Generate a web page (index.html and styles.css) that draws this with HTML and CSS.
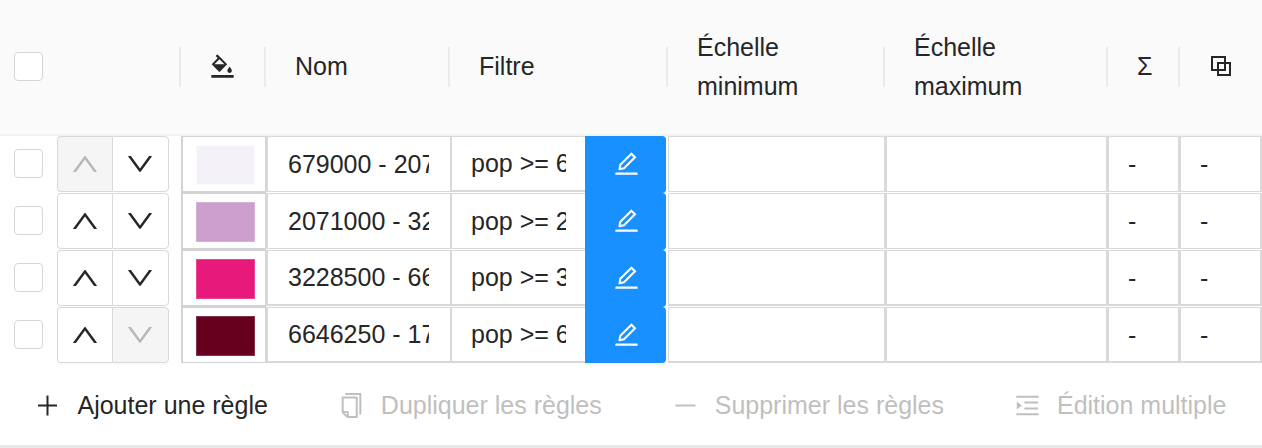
FILE: index.html
```html
<!DOCTYPE html>
<html lang="fr">
<head>
<meta charset="utf-8">
<title>Règles</title>
<link rel="stylesheet" href="styles.css">
</head>
<body>
<svg class="sprite" aria-hidden="true">
  <symbol id="up" viewBox="64 64 896 896"><path d="M890.5 755.3L537.9 269.2c-12.8-17.6-39-17.6-51.7 0L133.5 755.3A8 8 0 00140 768h75c5.1 0 9.9-2.5 12.9-6.6L512 369.8l284.1 391.6c3 4.1 7.8 6.6 12.9 6.6h75c6.5 0 10.3-7.4 6.5-12.7z"/></symbol>
  <symbol id="down" viewBox="64 64 896 896"><path d="M884 256h-75c-5.1 0-9.9 2.5-12.9 6.6L512 654.2 227.9 262.6c-3-4.1-7.8-6.6-12.9-6.6h-75c-6.5 0-10.3 7.4-6.5 12.7l352.6 486.1c12.8 17.6 39 17.6 51.7 0l352.6-486.1c3.9-5.3.1-12.7-6.4-12.7z"/></symbol>
  <symbol id="edit" viewBox="64 64 896 896"><path d="M257.7 752c2 0 4-.2 6-.5L431.9 722c2-.4 3.9-1.3 5.3-2.8l423.9-423.9a9.96 9.96 0 000-14.1L694.9 114.9c-1.9-1.9-4.4-2.9-7.1-2.9s-5.2 1-7.1 2.9L256.8 538.8c-1.5 1.5-2.4 3.3-2.8 5.3l-29.5 168.2a33.5 33.5 0 009.4 29.8c6.6 6.4 14.9 9.9 23.8 9.9zm67.4-174.4L687.8 215l73.3 73.3-362.7 362.6-88.9 15.7 15.6-89zM880 836H144c-17.7 0-32 14.3-32 32v36c0 4.4 3.6 8 8 8h784c4.4 0 8-3.6 8-8v-36c0-17.7-14.3-32-32-32z"/></symbol>
  <symbol id="fill" viewBox="64 64 896 896"><path d="M766.4 744.3c43.7 0 79.4-36.2 79.4-80.5 0-53.5-79.4-140.8-79.4-140.8S687 610.3 687 663.8c0 44.3 35.7 80.5 79.4 80.5zm-377.1-44.1c7.1 7.1 18.6 7.1 25.6 0l256.1-256c7.1-7.1 7.1-18.6 0-25.6l-256-256c-.6-.6-1.3-1.2-2-1.7l-78.2-78.2a9.11 9.11 0 00-12.8 0l-48 48a9.11 9.11 0 000 12.8l67.2 67.2-207.8 207.9c-7.1 7.1-7.1 18.6 0 25.6l255.9 256zm12.9-448.6l178.9 178.9H223.4l178.8-178.9zM904 816H120c-4.4 0-8 3.6-8 8v80c0 4.4 3.6 8 8 8h784c4.4 0 8-3.6 8-8v-80c0-4.4-3.6-8-8-8z"/></symbol>
  <symbol id="overlap" viewBox="0 0 25 25"><path d="M3 3h13v13H3zM9 9h12v12H9z" fill="none" stroke="currentColor" stroke-width="2"/></symbol>
  <symbol id="plus" viewBox="0 0 25 25"><path d="M3 11.5h19v2H3zM11.5 2.5h2v20h-2z"/></symbol>
  <symbol id="minus" viewBox="0 0 25 25"><path d="M2.5 11.5h20v2h-20z"/></symbol>
  <symbol id="copy" viewBox="64 64 896 896"><path d="M832 64H296c-4.4 0-8 3.6-8 8v56c0 4.4 3.6 8 8 8h496v688c0 4.4 3.6 8 8 8h56c4.4 0 8-3.6 8-8V96c0-17.7-14.3-32-32-32zM704 192H192c-17.7 0-32 14.3-32 32v530.7c0 8.5 3.4 16.6 9.4 22.6l173.3 173.3c2.2 2.2 4.7 4 7.4 5.5v1.9h4.2c3.5 1.3 7.2 2 11 2H704c17.7 0 32-14.3 32-32V224c0-17.7-14.3-32-32-32zM350 856.2L263.9 770H350v86.2zM664 888H414V746c0-22.1-17.9-40-40-40H232V264h432v624z"/></symbol>
  <symbol id="multi" viewBox="64 64 896 896"><path d="M408 442h480c4.4 0 8-3.6 8-8v-56c0-4.4-3.6-8-8-8H408c-4.4 0-8 3.6-8 8v56c0 4.4 3.6 8 8 8zm-8 204c0 4.4 3.6 8 8 8h480c4.4 0 8-3.6 8-8v-56c0-4.4-3.6-8-8-8H408c-4.4 0-8 3.6-8 8v56zm504-486H120c-4.4 0-8 3.6-8 8v56c0 4.4 3.6 8 8 8h784c4.4 0 8-3.6 8-8v-56c0-4.4-3.6-8-8-8zm0 632H120c-4.4 0-8 3.6-8 8v56c0 4.4 3.6 8 8 8h784c4.4 0 8-3.6 8-8v-56c0-4.4-3.6-8-8-8zM142.4 642.1L298.7 519a8.84 8.84 0 000-13.9L142.4 381.9c-5.8-4.6-14.4-.5-14.4 6.9v246.3a8.9 8.9 0 0014.4 7z"/></symbol>
</svg>
<table class="rules">
  <colgroup>
    <col class="col-check"><col class="col-order"><col class="col-color"><col class="col-name"><col class="col-filter"><col class="col-min"><col class="col-max"><col class="col-count"><col class="col-dup">
  </colgroup>
  <thead>
    <tr>
      <th class="check"><input type="checkbox" class="checkbox" aria-label="Tout sélectionner"></th>
      <th class="sep"></th>
      <th class="sep"><div class="head"><svg class="icon"><use href="#fill"/></svg></div></th>
      <th class="sep"><div class="head">Nom</div></th>
      <th class="sep"><div class="head">Filtre</div></th>
      <th class="sep"><div class="head">Échelle minimum</div></th>
      <th class="sep"><div class="head">Échelle maximum</div></th>
      <th class="sep"><div class="head">Σ</div></th>
      <th><div class="head"><svg class="icon"><use href="#overlap"/></svg></div></th>
    </tr>
  </thead>
  <tbody>
    <tr>
      <td class="check"><input type="checkbox" class="checkbox" aria-label="Sélectionner la règle 1"></td>
      <td><div class="order"><button class="move" disabled aria-label="Monter"><svg class="arrow"><use href="#up"/></svg></button><button class="move" aria-label="Descendre"><svg class="arrow"><use href="#down"/></svg></button></div></td>
      <td class="color"><button class="color-cell" aria-label="Symbole"><span class="swatch swatch-pale"></span></button></td>
      <td><input class="field name" aria-label="Nom" value="679000 - 2071000"></td>
      <td><div class="filter"><input class="field filter-text" aria-label="Filtre" value="pop &gt;= 679000"><button class="edit" aria-label="Modifier le filtre"><svg class="icon"><use href="#edit"/></svg></button></div></td>
      <td><input class="field scale-min" aria-label="Échelle minimum"></td>
      <td><input class="field scale-max" aria-label="Échelle maximum"></td>
      <td><div class="field">-</div></td>
      <td><div class="field">-</div></td>
    </tr>
    <tr>
      <td class="check"><input type="checkbox" class="checkbox" aria-label="Sélectionner la règle 2"></td>
      <td><div class="order"><button class="move" aria-label="Monter"><svg class="arrow"><use href="#up"/></svg></button><button class="move" aria-label="Descendre"><svg class="arrow"><use href="#down"/></svg></button></div></td>
      <td class="color"><button class="color-cell" aria-label="Symbole"><span class="swatch swatch-mauve"></span></button></td>
      <td><input class="field name" aria-label="Nom" value="2071000 - 3228500"></td>
      <td><div class="filter"><input class="field filter-text" aria-label="Filtre" value="pop &gt;= 2071000"><button class="edit" aria-label="Modifier le filtre"><svg class="icon"><use href="#edit"/></svg></button></div></td>
      <td><input class="field scale-min" aria-label="Échelle minimum"></td>
      <td><input class="field scale-max" aria-label="Échelle maximum"></td>
      <td><div class="field">-</div></td>
      <td><div class="field">-</div></td>
    </tr>
    <tr>
      <td class="check"><input type="checkbox" class="checkbox" aria-label="Sélectionner la règle 3"></td>
      <td><div class="order"><button class="move" aria-label="Monter"><svg class="arrow"><use href="#up"/></svg></button><button class="move" aria-label="Descendre"><svg class="arrow"><use href="#down"/></svg></button></div></td>
      <td class="color"><button class="color-cell" aria-label="Symbole"><span class="swatch swatch-pink"></span></button></td>
      <td><input class="field name" aria-label="Nom" value="3228500 - 6646250"></td>
      <td><div class="filter"><input class="field filter-text" aria-label="Filtre" value="pop &gt;= 3228500"><button class="edit" aria-label="Modifier le filtre"><svg class="icon"><use href="#edit"/></svg></button></div></td>
      <td><input class="field scale-min" aria-label="Échelle minimum"></td>
      <td><input class="field scale-max" aria-label="Échelle maximum"></td>
      <td><div class="field">-</div></td>
      <td><div class="field">-</div></td>
    </tr>
    <tr>
      <td class="check"><input type="checkbox" class="checkbox" aria-label="Sélectionner la règle 4"></td>
      <td><div class="order"><button class="move" aria-label="Monter"><svg class="arrow"><use href="#up"/></svg></button><button class="move" disabled aria-label="Descendre"><svg class="arrow"><use href="#down"/></svg></button></div></td>
      <td class="color"><button class="color-cell" aria-label="Symbole"><span class="swatch swatch-wine"></span></button></td>
      <td><input class="field name" aria-label="Nom" value="6646250 - 17000000"></td>
      <td><div class="filter"><input class="field filter-text" aria-label="Filtre" value="pop &gt;= 6646250"><button class="edit" aria-label="Modifier le filtre"><svg class="icon"><use href="#edit"/></svg></button></div></td>
      <td><input class="field scale-min" aria-label="Échelle minimum"></td>
      <td><input class="field scale-max" aria-label="Échelle maximum"></td>
      <td><div class="field">-</div></td>
      <td><div class="field">-</div></td>
    </tr>
  </tbody>
</table>
<footer class="actions">
  <button class="action"><svg class="icon"><use href="#plus"/></svg>Ajouter une règle</button>
  <button class="action" disabled><svg class="icon"><use href="#copy"/></svg>Dupliquer les règles</button>
  <button class="action" disabled><svg class="icon"><use href="#minus"/></svg>Supprimer les règles</button>
  <button class="action" disabled><svg class="icon"><use href="#multi"/></svg>Édition multiple</button>
</footer>
</body>
</html>
```
FILE: styles.css
```css
* { box-sizing: border-box; }

body {
  margin: 0;
  background: #fff;
  color: #262626;
  font: 25px/39px "Liberation Sans", Arial, sans-serif;
}

button, input { font: inherit; color: inherit; margin: 0; border-radius: 0; }
button { padding: 0; border: 0; background: none; }

.sprite { display: none; }
.icon { display: block; flex: none; width: 25px; height: 25px; fill: currentColor; }
.arrow { display: block; width: 28px; height: 28px; fill: currentColor; }

.rules { width: 100%; table-layout: fixed; border-collapse: separate; border-spacing: 0; }
.col-check { width: 57px; }
.col-order { width: 124px; }
.col-color { width: 85px; }
.col-name { width: 184px; }
.col-filter { width: 218px; }
.col-min { width: 217px; }
.col-max { width: 223px; }
.col-count { width: 72px; }
.col-dup { width: 82px; }

th {
  height: 136px;
  padding: 0 0 1px;
  background: #fafafa;
  border-bottom: 2px solid #f2f2f2;
  font-weight: 400;
  text-align: left;
}
.sep {
  background: linear-gradient(#ebebeb, #ebebeb) right center / 2px 40px no-repeat #fafafa;
}
.head { padding: 0 26px 0 29px; }

td { height: 57px; padding: 0 0 1px; vertical-align: top; }
.check { padding: 0 0 2px 14px; vertical-align: middle; }

.checkbox {
  display: block;
  appearance: none;
  width: 29px;
  height: 29px;
  background: #fff;
  border: 1px solid #d6d6d6;
  border-radius: 4px;
}

.order { display: flex; width: 112px; }
.move {
  flex: 1;
  display: flex;
  align-items: center;
  justify-content: center;
  height: 56px;
  background: #fff;
  border: 1px solid #d9d9d9;
}
.move:first-child { flex: none; width: 55px; border-radius: 4px 0 0 4px; border-right: 0; }
.move:last-child { padding-right: 2px; border-radius: 0 4px 4px 0; }
.move:disabled { background: #f5f5f5; color: #b8b8b8; }
tr:last-child .order { box-shadow: 0 3px 0 -1px #fafafa; }

.color { background: #d3d3d3; }
tr:last-child .color { background: #fff; }
.color-cell {
  display: flex;
  align-items: center;
  width: 100%;
  height: 56px;
  padding: 2px 10px 0 13px;
  background: #fff;
  border: solid #d3d3d3;
  border-width: 1px 1px 1px 2px;
}
.swatch { flex: 1; height: 40px; border: 1px solid rgb(255 255 255 / 20%); }
.swatch-pale { background: #f4f2f8; border-color: rgb(255 255 255 / 60%); }
.swatch-mauve { background: #cd9fce; }
.swatch-pink { background: #e7197b; }
.swatch-wine { background: #67001f; }

.field {
  display: block;
  width: 100%;
  height: 56px;
  padding: 0 19px;
  background: #fff;
  border: solid #d9d9d9;
  border-width: 1px 2px 1px 1px;
  line-height: 54px;
}
.name { border-width: 1px 0 1px 2px; padding: 0 21px 0 20px; }
.scale-min { border-right-width: 1px; }
.scale-max { border-left-width: 2px; }
tr:nth-child(n+3) .field { border-bottom-width: 2px; }

.filter { display: flex; padding-right: 2px; }
.filter .filter-text {
  flex: 1;
  min-width: 0;
  border-width: 1px 0 1px 2px;
}
tr:first-child .filter-text { border-bottom-width: 2px; }
.edit {
  display: flex;
  align-items: center;
  justify-content: center;
  width: 81px;
  height: 56px;
  padding: 0 0 2px 1px;
  background: #1890ff;
  color: #fff;
  border-radius: 0 4px 4px 0;
  box-shadow: 0 1px 0 #1890ff;
}
tr:last-child .edit { box-shadow: 0 3px 0 #f7f7f7; }

.actions {
  display: flex;
  justify-content: space-around;
  padding: 22px 0 20px;
  border-bottom: 3px solid #e8e8e8;
}
.action { display: flex; align-items: center; gap: 17px; white-space: nowrap; }
.action:disabled { color: #bfbfbf; }
```
